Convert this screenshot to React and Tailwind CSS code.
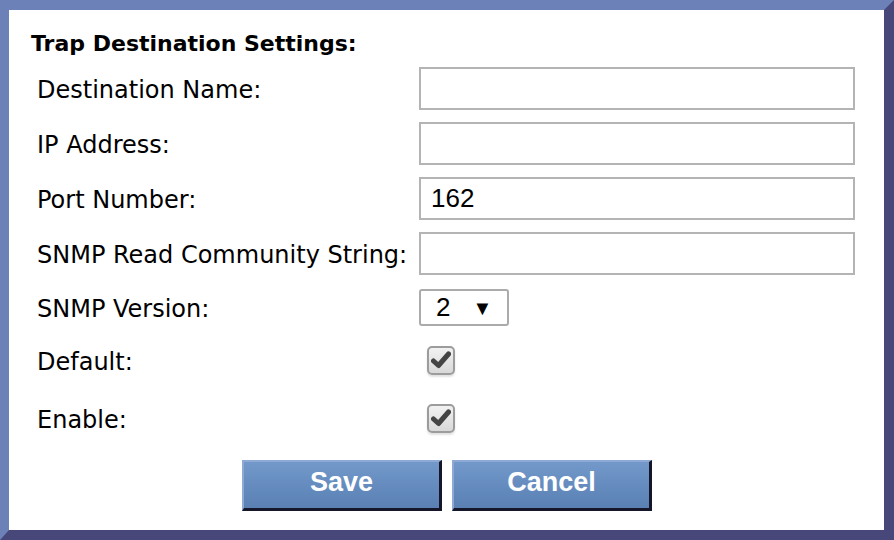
import React from "react";

const font = { fontFamily: '"DejaVu Sans", Tahoma, sans-serif' };

const TextRow = ({ label, value = "" }) => (
  <div className="flex items-center h-[55px]">
    <span className="w-[382px] pt-[3px] text-[24px] text-black">{label}</span>
    <input
      defaultValue={value}
      className="w-[436px] h-[43px] border-2 border-[#b4b4b4] bg-white px-[10px] text-[26px] text-black font-[family-name:'Liberation_Sans',Arial,sans-serif] outline-none"
    />
  </div>
);

const Check = () => (
  <div className="ml-[8px] w-[28px] h-[29px] rounded-[5px] border-2 border-[#9c9c9c] bg-gradient-to-b from-[#f2f2f2] to-[#d8d8d8] flex items-center justify-center shadow-[0_2px_2px_rgba(0,0,0,0.12)]">
    <svg width="20" height="18" viewBox="0 0 20 18">
      <path d="M2.5 10 L7.5 14.5 L17.5 3" fill="none" stroke="#444" strokeWidth="5" strokeLinecap="round" strokeLinejoin="round" />
    </svg>
  </div>
);

const Btn = ({ children }) => (
  <button className="w-[200px] h-[51px] pb-[6px] bg-gradient-to-b from-[#7299ca] to-[#5a80b4] border-t-2 border-l-2 border-t-[#8eaad4] border-l-[#8eaad4] border-b-[3px] border-r-[3px] border-b-[#16162a] border-r-[#16162a] text-white font-bold text-[27px] font-[family-name:'Liberation_Sans',Arial,sans-serif]">
    {children}
  </button>
);

export default function App() {
  return (
    <div className="w-[894px] h-[540px] bg-white border-t-[10px] border-l-[9px] border-b-[10px] border-r-[10px] border-t-[#6b81b7] border-l-[#6b81b7] border-b-[#474879] border-r-[#474879]" style={font}>
      <div className="pl-[22px] pt-[19px]">
        <h2 className="text-[22px] font-bold text-black leading-[30px]">Trap Destination Settings:</h2>
        <div className="pl-[6px] mt-[2px]">
          <TextRow label="Destination Name:" />
          <TextRow label="IP Address:" />
          <TextRow label="Port Number:" value="162" />
          <TextRow label="SNMP Read Community String:" />
          <div className="flex items-center h-[53px]">
            <span className="w-[382px] pt-[3px] text-[24px] text-black">SNMP Version:</span>
            <div className="w-[90px] h-[37px] border-2 border-[#ababab] rounded-[3px] flex items-center pl-[15px] gap-[22px] text-[26px] text-black font-[family-name:'Liberation_Sans',Arial,sans-serif]">
              <span>2</span>
              <span className="text-[20px]">▼</span>
            </div>
          </div>
          <div className="flex items-center h-[52px]">
            <span className="w-[382px] pt-[3px] text-[24px] text-black">Default:</span>
            <Check />
          </div>
          <div className="flex items-center h-[64px]">
            <span className="w-[382px] pt-[3px] text-[24px] text-black">Enable:</span>
            <Check />
          </div>
        </div>
        <div className="flex gap-[10px] pl-[211px] mt-[10px]">
          <Btn>Save</Btn>
          <Btn>Cancel</Btn>
        </div>
      </div>
    </div>
  );
}
